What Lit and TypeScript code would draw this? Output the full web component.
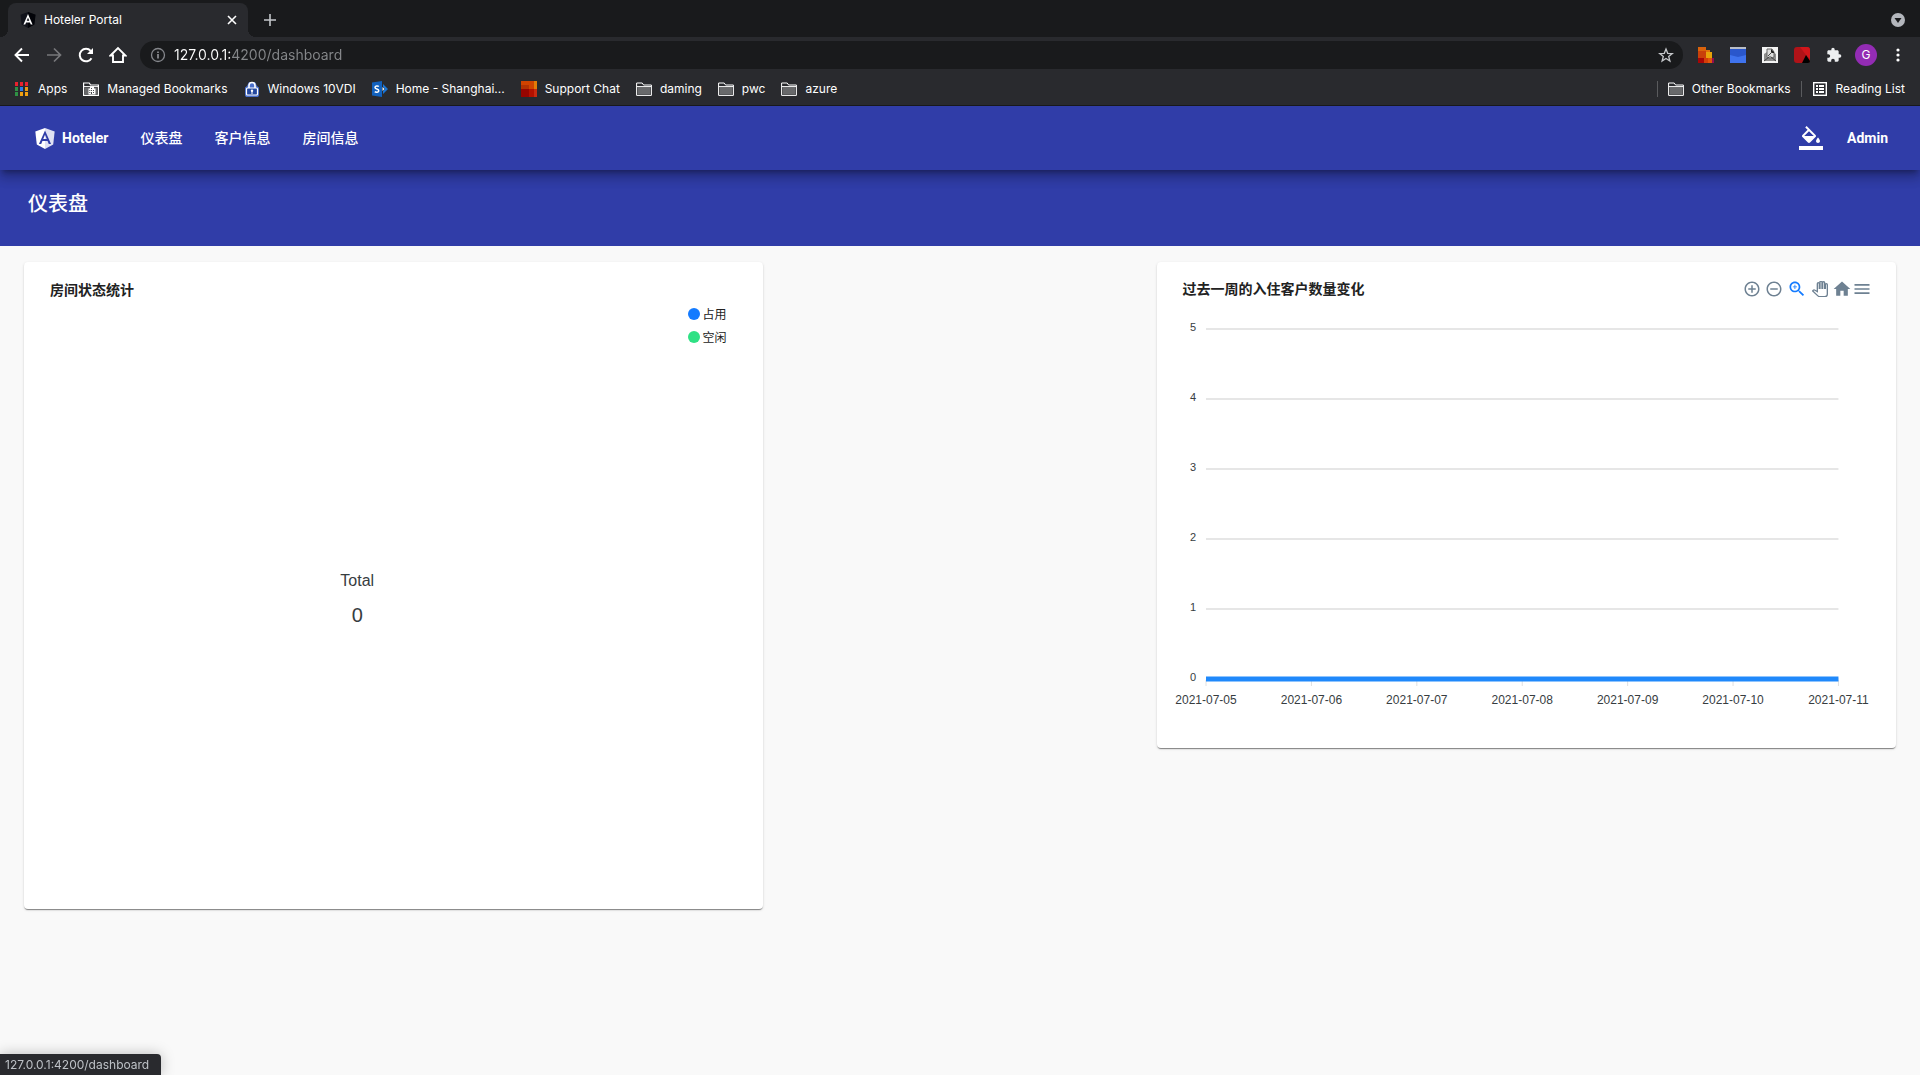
import { LitElement, html, css, svg, type TemplateResult, type SVGTemplateResult } from "lit";
import { customElement, property } from "lit/decorators.js";

const folder = svg`<path d="M.6 2h5.600l1.400 2H15.400v10.400H.6z" fill="none" stroke="#fff" stroke-width="1"/><path d="M1.500 6.200h13v7.400h-13z" fill="#68696b"/><path d="M1 5.600h14" stroke="#fff" stroke-width="1"/>`;

const appsColors = ["#e8222e", "#e8222e", "#e8222e", "#2f9144", "#2a7de8", "#e99a10", "#2f9144", "#f0a010", "#f0a010"];

const bookmarkIcons: Record<string, SVGTemplateResult> = {
  apps: svg`${appsColors.map((c, i) => svg`<rect x=${1 + (i % 3) * 5} y=${1 + Math.floor(i / 3) * 5} width="3" height="4" fill=${c}/>`)}`,
  managed: svg`<path d="M.6 2h5.600l1.400 2H15.400v10.400H.6z" fill="none" stroke="#fff" stroke-width="1.200"/><path d="M1 5.600h14" stroke="#fff"/><path d="M1.500 6.500h13v7h-13z" fill="#68696b"/><path d="M7 5.500h4v2h1.500v6H5.500v-6H7z" fill="#fff"/><path d="M8 7h1v1H8zM10 9h1v1h-1zM8 9h1v1H8zM6.300 9h1v1h-1zM10 11h1v1h-1zM8 11h1v2H8zM6.300 11h1v1h-1z" fill="#4b4c4f"/>`,
  lock: svg`<path d="M3 5l2-4h6l2 4 2 1.500v8L14 16H2l-1-1.500v-8z" fill="#4a6fcb"/><path d="M5 8V4.500a3 3 0 0 1 6 0V8" fill="none" stroke="#fff" stroke-width="1.600"/><rect x="2.500" y="7" width="11" height="7" rx="1" fill="#24489f" stroke="#fff" stroke-width="1.200"/><circle cx="8" cy="9.800" r="1.200" fill="#fff"/><path d="M7.500 10h1v3h-1z" fill="#fff"/>`,
  sharepoint: svg`<path d="M0 1.500L10 0v16L0 14.500z" fill="#1261bd"/><path d="M6.800 5.500C6 4.800 3 4.600 3 6.400c0 1.900 3.800 1.300 3.800 3.300 0 1.900-3 1.800-4 .9" fill="none" stroke="#fff" stroke-width="1.500"/><path d="M11 3l5 5-5 5v-3l2-2-2-2z" fill="#1976d8"/><path d="M10.500 6l2 2-2 2z" fill="#fff"/>`,
  pwc: svg`<path d="M0 0h13v8H0z" fill="#d04300"/><path d="M13 0h3v8h-3z" fill="#e37c06"/><path d="M0 4h8v4H0z" fill="#b23202"/><path d="M0 8h8v8H0z" fill="#960500"/><path d="M8 8h5v8H8z" fill="#b41100"/><path d="M13 8h3v8h-3z" fill="#c92a10"/>`,
  folder,
  reading: svg`<rect x="1.700" y="1.700" width="12.600" height="12.600" fill="none" stroke="#fff" stroke-width="1.400"/><path d="M4 4h2v2H4zM7 4h5v2H7zM4 7h2v2H4zM7 7h5v2H7zM4 10h2v2H4zM7 10h5v2H7z" fill="#fff"/>`,
};

@customElement("browser-chrome")
export class BrowserChrome extends LitElement {
  static styles = css`
    :host { display: block; font: 12px/16px Inter, sans-serif; color: #fff; background: #292a2e; border-bottom: 1px solid #18191b; }
    a { color: inherit; text-decoration: none; }
    button { border: 0; padding: 0; background: none; color: inherit; font: inherit; display: grid; place-items: center; }
    svg { display: block; }
    .tabs { display: flex; align-items: center; height: 37px; background: #191a1c; padding: 0 12px 0 8px; }
    .tab { position: relative; display: flex; align-items: center; align-self: flex-end; box-sizing: border-box; width: 240px; height: 34px; padding: 0 8px 0 12px; gap: 8px; background: #292a2e; border-radius: 8px 8px 0 0; }
    .tab::before, .tab::after { content: ""; position: absolute; bottom: 0; width: 8px; height: 8px; }
    .tab::before { right: 100%; background: radial-gradient(circle at 0 0, #191a1c 8px, #292a2e 8px); }
    .tab::after { left: 100%; background: radial-gradient(circle at 100% 0, #191a1c 8px, #292a2e 8px); }
    .name { flex: 1; }
    .new { width: 44px; height: 28px; margin-top: 3px; }
    .search { width: 20px; height: 20px; margin: 3px 0 0 auto; }
    .bar { display: flex; align-items: center; height: 36px; padding: 0 6px; }
    .bar button { width: 32px; height: 32px; }
    .omni { display: flex; align-items: center; flex: 1; height: 28px; margin: 0 7px 0 6px; padding: 0 1px 0 10px; background: #191a1c; border-radius: 14px; }
    .omni .info { width: 16px; }
    .url { flex: 1; min-width: 0; border: 0; outline: 0; margin: 0 0 0 8px; padding: 0; font: 14px/20px Inter, sans-serif; color: transparent; background: linear-gradient(90deg, #fff 58px, #85878a 58px); background-clip: text; -webkit-background-clip: text; }
    .avatar { display: grid; place-items: center; width: 22px; height: 22px; border-radius: 50%; background: #932cb4; font: 12px/16px Inter, sans-serif; }
    .marks { display: flex; align-items: center; gap: 16px; height: 32px; padding: 0 15px 0 14px; white-space: nowrap; }
    .mark { display: flex; align-items: center; gap: 8px; }
    .end { display: flex; align-items: center; gap: 10px; margin-left: auto; }
    .rule { width: 1px; height: 16px; background: #5a5b5e; }
  `;

  private mark(icon: string, label: string): TemplateResult {
    return html`<a class="mark" href="#"><svg width="16" height="16" viewBox="0 0 16 16">${bookmarkIcons[icon]}</svg>${label}</a>`;
  }

  render() {
    return html`
      <div class="tabs">
        <div class="tab">
          <svg width="16" height="16" viewBox="0 0 250 250"><path d="M125 0L8 42l18 154 99 54 99-54 18-154z" fill="#11131b"/><path d="M125 0l117 42-18 154-99 54z" fill="#020308"/><path fill="#fff" d="M125 30L54 196h28l13-33h60l13 33h28zm20 108h-40l20-49z"/></svg>
          <span class="name">Hoteler Portal</span>
          <button aria-label="Close tab"><svg width="16" height="16" viewBox="0 0 16 16"><path d="M4 4l8 8M12 4l-8 8" stroke="#fff" stroke-width="1.600"/></svg></button>
        </div>
        <button class="new" aria-label="New tab"><svg width="14" height="14" viewBox="0 0 14 14"><path d="M7 1v12M1 7h12" stroke="#c3c6ca" stroke-width="1.600"/></svg></button>
        <button class="search" aria-label="Search tabs"><svg width="14" height="14" viewBox="0 0 14 14"><circle cx="7" cy="7" r="7" fill="#b3b6bc"/><path d="M3.500 5h7L7 10z" fill="#191a1c"/></svg></button>
      </div>
      <div class="bar">
        <button aria-label="Back"><svg width="16" height="16" viewBox="0 0 16 16"><path d="M15 8H2.500M8 1.500L1.500 8 8 14.500" fill="none" stroke="#fff" stroke-width="1.900"/></svg></button>
        <button aria-label="Forward"><svg width="16" height="16" viewBox="0 0 16 16"><path d="M1 8h12.500M8 1.500L14.500 8 8 14.500" fill="none" stroke="#77787b" stroke-width="1.700"/></svg></button>
        <button aria-label="Reload"><svg width="16" height="16" viewBox="0 0 16 16"><path d="M13.500 11.200A6.300 6.300 0 1 1 12.700 3.800" fill="none" stroke="#fff" stroke-width="2"/><path d="M15 1v6H9z" fill="#fff"/></svg></button>
        <button aria-label="Home"><svg width="18" height="18" viewBox="0 0 18 18"><path d="M1.500 9.500L9 2l7.500 7.500H14V16H4V9.500z" fill="none" stroke="#fff" stroke-width="1.900"/></svg></button>
        <div class="omni">
          <button class="info" aria-label="Site information"><svg width="16" height="16" viewBox="0 0 16 16"><circle cx="8" cy="8" r="6.500" fill="none" stroke="#85878c" stroke-width="1.300"/><path d="M8 7v4.500M8 4.500V6" stroke="#9a9ca0" stroke-width="1.500"/></svg></button>
          <input class="url" aria-label="Address" .value=${"127.0.0.1:4200/dashboard"} />
          <button aria-label="Bookmark this tab"><svg width="16" height="16" viewBox="0 0 16 16"><path d="M8 2l1.700 4.300 4.600.3-3.600 2.900 1.200 4.500L8 11.500 4.100 14l1.200-4.500L1.700 6.600l4.600-.3z" fill="none" stroke="#c5c7ca" stroke-width="1.300"/></svg></button>
        </div>
        <button aria-label="Orange blocks"><svg width="16" height="16" viewBox="0 0 16 16"><path d="M0 0h8v4H0z" fill="#d9620b"/><path d="M0 4h8v7H0z" fill="#c9400a"/><path d="M8 3h4v3H8z" fill="#e2700a"/><path d="M8 5h6v6H8z" fill="#e8a20a"/><path d="M0 11h6v5H0z" fill="#a80606"/><path d="M6 11h4v5H6z" fill="#d43e08"/><path d="M10 11h4v5h-4z" fill="#e2560b"/><path d="M14 11h2v5h-2z" fill="#920f50"/></svg></button>
        <button aria-label="Blue window"><svg width="16" height="16" viewBox="0 0 16 16"><path d="M0 0h16v3H0z" fill="#b9bec8"/><path d="M0 2h16v14H0z" fill="#3f73ee"/><path d="M0 2h16v6L8 10 0 8z" fill="#2a57cc"/></svg></button>
        <button aria-label="Page mail"><svg width="16" height="16" viewBox="0 0 16 16"><path d="M0 0h16v16H0z" fill="#f4f4f4"/><path d="M2 7l3-2v5h6V5l3 2v7H2z" fill="#8d8d8d"/><path d="M5 2h5l2 3v5l-4 2-3-2z" fill="#ddd" stroke="#666"/><path d="M9 2l3 3v1H9z" fill="#222"/><path d="M2 14l5-4h2l5 4M6 9l4-4" fill="none" stroke="#444"/></svg></button>
        <button aria-label="Red diamond"><svg width="16" height="16" viewBox="0 0 16 16"><rect width="16" height="16" rx="3" fill="#b01318"/><path d="M3 0h10a3 3 0 0 1 3 3v9l-4-4-6-8z" fill="#d2161b"/><path d="M12 8l4 6a2 2 0 0 1-2 2H8z" fill="#000"/></svg></button>
        <button aria-label="Extensions"><svg width="16" height="16" viewBox="0 0 24 24"><path fill="#eceef0" d="M20.500 11H19V7c0-1.100-.9-2-2-2h-4V3.500a2.500 2.500 0 0 0-5 0V5H4c-1.100 0-1.990.9-1.990 2v3.800H3.500c1.490 0 2.700 1.210 2.700 2.700s-1.210 2.700-2.700 2.700H2V20c0 1.100.9 2 2 2h3.800v-1.500c0-1.490 1.210-2.700 2.700-2.700s2.700 1.210 2.700 2.700V22H17c1.100 0 2-.9 2-2v-4h1.500a2.500 2.500 0 0 0 0-5z"/></svg></button>
        <button aria-label="Profile"><span class="avatar">G</span></button>
        <button aria-label="Menu"><svg width="4" height="14" viewBox="0 0 4 14"><circle cx="2" cy="2" r="1.600" fill="#fff"/><circle cx="2" cy="7" r="1.600" fill="#fff"/><circle cx="2" cy="12" r="1.600" fill="#fff"/></svg></button>
      </div>
      <nav class="marks" aria-label="Bookmarks">
        ${this.mark("apps", "Apps")} ${this.mark("managed", "Managed Bookmarks")}
        ${this.mark("lock", "Windows 10VDI")} ${this.mark("sharepoint", "Home - Shanghai...")}
        ${this.mark("pwc", "Support Chat")} ${this.mark("folder", "daming")}
        ${this.mark("folder", "pwc")} ${this.mark("folder", "azure")}
        <div class="end">
          <span class="rule"></span>${this.mark("folder", "Other Bookmarks")}
          <span class="rule"></span>${this.mark("reading", "Reading List")}
        </div>
      </nav>
    `;
  }
}

@customElement("app-toolbar")
export class AppToolbar extends LitElement {
  static styles = css`
    :host { display: block; }
    a, button { color: inherit; text-decoration: none; font: inherit; border: 0; background: none; display: flex; align-items: center; padding: 0 16px; height: 36px; }
    .bar { position: relative; display: flex; align-items: center; height: 64px; padding: 0 16px; color: #fff; background: #303da8; font: 500 14px/20px Roboto, "Noto Sans CJK SC", sans-serif; box-shadow: 0 5px 5px -3px rgba(0,0,0,.3), 0 8px 10px 1px rgba(0,0,0,.14), 0 3px 14px 2px rgba(0,0,0,.12); }
    .brand { gap: 4px; font-weight: 700; }
    .fill { margin-left: auto; padding: 0 8px; }
    .admin { font-weight: 700; }
    svg { display: block; }
  `;

  render() {
    return html`
      <nav class="bar">
        <a class="brand" href="#"><svg width="26" height="26" viewBox="0 0 250 250"><path fill="#fff" d="M125 30L31.900 63.200l14.200 123.100L125 230z"/><path fill="#dfe1f3" d="M125 30v200l78.900-43.700 14.200-123.100z"/><path fill="#303da8" d="M125 52.100L66.800 182.600h21.700l11.700-29.200h49.400l11.700 29.200H183zm17 83.300h-34l17-40.900z"/></svg>Hoteler</a>
        <a href="#">仪表盘</a>
        <a href="#">客户信息</a>
        <a href="#">房间信息</a>
        <button class="fill" aria-label="Theme"><svg width="24" height="24" viewBox="0 0 24 24" fill="#fff"><path d="M16.560 8.940L7.620 0 6.210 1.410l2.380 2.380-5.150 5.150c-.59.59-.59 1.540 0 2.120l5.500 5.500c.29.29.68.44 1.060.44s.77-.15 1.060-.44l5.500-5.500c.59-.58.59-1.530 0-2.120zM5.210 10L10 5.210 14.790 10zM19 11.500s-2 2.170-2 3.500c0 1.100.9 2 2 2s2-.9 2-2c0-1.330-2-3.500-2-3.500zM0 20h24v4H0z"/></svg></button>
        <button class="admin">Admin</button>
      </nav>
    `;
  }
}

const cardBase = css`
  :host { display: block; box-sizing: border-box; background: #fff; border-radius: 4px; padding: 16px; color: #222; box-shadow: 0 2px 1px -1px rgba(0,0,0,.3), 0 1px 1px 0 rgba(0,0,0,.18), 0 1px 3px 0 rgba(0,0,0,.12); }
  .title { margin: 0; font: 700 14px/24px Roboto, "Noto Sans CJK SC", sans-serif; }
`;

@customElement("room-status")
export class RoomStatus extends LitElement {
  static styles = [cardBase, css`
    .title { padding-left: 10px; }
    .body { display: flex; height: 591px; }
    .donut { flex: 1; display: flex; flex-direction: column; align-items: center; justify-content: center; gap: 10px; color: #373d3f; font-family: "Liberation Sans", sans-serif; }
    .total { font-size: 16px; line-height: 24px; }
    .value { font-size: 20px; line-height: 24px; }
    .legend { width: 73px; margin: 0; padding: 0; list-style: none; font: 12px/23px "Noto Sans CJK SC", sans-serif; }
    .item { display: flex; align-items: center; gap: 2px; padding-left: 14px; }
    .dot { width: 12px; height: 12px; border-radius: 50%; background: #147bff; }
    .free { background: #2fe184; }
  `];

  render() {
    return html`
      <h2 class="title">房间状态统计</h2>
      <div class="body">
        <div class="donut"><span class="total">Total</span><span class="value">0</span></div>
        <ul class="legend">
          <li class="item"><span class="dot"></span>占用</li>
          <li class="item"><span class="dot free"></span>空闲</li>
        </ul>
      </div>
    `;
  }
}

@customElement("guest-trend")
export class GuestTrend extends LitElement {
  static styles = [cardBase, css`
    .head { display: flex; align-items: center; padding: 0 8px 0 10px; height: 22px; }
    .tools { display: flex; align-items: center; margin-left: auto; color: #6e8192; }
    button { display: grid; place-items: center; width: 20px; height: 20px; border: 0; padding: 0; background: none; color: inherit; fill: currentColor; }
    .wide { width: 24px; }
    .on { width: 22px; color: #147bff; }
    .plot { padding: 28px 42px 14px 33px; }
    .chart { display: block; width: 100%; height: 390px; overflow: visible; font-family: "Liberation Sans", sans-serif; fill: #373d3f; }
    .tick { font-size: 11px; text-anchor: end; }
    .date { font-size: 12px; text-anchor: middle; }
    .grid { stroke: #e6e6e6; stroke-width: 2; }
    .mark { stroke: #e0e0e0; }
    .series { stroke: #2089fb; stroke-width: 5; }
  `];

  @property({ attribute: false }) days = ["05", "06", "07", "08", "09", "10", "11"];

  private icon(label: string, size: number, path: SVGTemplateResult, cls = ""): TemplateResult {
    return html`<button class=${cls} aria-label=${label}><svg width=${size} height=${size} viewBox="0 0 24 24">${path}</svg></button>`;
  }

  render() {
    const last = this.days.length - 1;
    return html`
      <div class="head">
        <h2 class="title">过去一周的入住客户数量变化</h2>
        <div class="tools">
          ${this.icon("Zoom in", 18, svg`<path d="M13 7h-2v4H7v2h4v4h2v-4h4v-2h-4V7zm-1-5C6.480 2 2 6.480 2 12s4.480 10 10 10 10-4.480 10-10S17.520 2 12 2zm0 18c-4.410 0-8-3.590-8-8s3.590-8 8-8 8 3.590 8 8-3.590 8-8 8z"/>`)}
          ${this.icon("Zoom out", 18, svg`<path d="M7 11v2h10v-2H7zm5-9C6.480 2 2 6.480 2 12s4.480 10 10 10 10-4.480 10-10S17.520 2 12 2zm0 18c-4.410 0-8-3.590-8-8s3.590-8 8-8 8 3.590 8 8-3.590 8-8 8z"/>`, "wide")}
          ${this.icon("Selection zoom", 20, svg`<path d="M15.500 14h-.79l-.28-.27C15.410 12.590 16 11.110 16 9.500 16 5.910 13.090 3 9.500 3S3 5.910 3 9.500 5.910 16 9.500 16c1.610 0 3.090-.59 4.230-1.570l.27.28v.79l5 4.990L20.490 19l-4.990-5zm-6 0C7.010 14 5 11.990 5 9.500S7.010 5 9.500 5 14 7.010 14 9.500 11.990 14 9.500 14z"/><path d="M12 10h-2v2H9v-2H7V9h2V7h1v2h2v1z"/>`, "on")}
          ${this.icon("Panning", 16, svg`<path fill="#fff" stroke="#6e8192" stroke-width="2" d="M23 5.500V20c0 2.200-1.800 3.500-4 3.500h-7.300c-1.080 0-2.100-.43-2.850-1.190L1 14.830s1.260-1.230 1.300-1.250c.22-.19.49-.29.79-.29.22 0 .42.060.6.160.040.010 4.310 2.460 4.310 2.460V4c0-.83.67-1.500 1.500-1.500S11 3.170 11 4v7h1V1.500c0-.83.67-1.500 1.500-1.500S15 .67 15 1.500V11h1V2.500c0-.83.67-1.500 1.500-1.500s1.500.67 1.500 1.500V11h1V5.500c0-.83.67-1.500 1.500-1.500s1.500.67 1.500 1.500z"/>`, "wide")}
          ${this.icon("Reset zoom", 20, svg`<path d="M10 20v-6h4v6h5v-8h3L12 3 2 12h3v8z"/>`)}
          ${this.icon("Menu", 20, svg`<path d="M3 18h18v-2H3v2zm0-5h18v-2H3v2zm0-7v2h18V6H3z"/>`)}
        </div>
      </div>
      <div class="plot">
        <svg class="chart" role="img" aria-label="过去一周的入住客户数量变化">
          ${[5, 4, 3, 2, 1, 0].map((n, i) => svg`
            <line class="grid" x1="0" x2="100%" y1=${i * 70 + 1} y2=${i * 70 + 1}/>
            <text class="tick" x="-10" y=${i * 70 + 3}>${n}</text>`)}
          ${this.days.map((d, i) => svg`
            <line class="mark" x1="${(i * 100) / last}%" x2="${(i * 100) / last}%" y1="352" y2="358"/>
            <text class="date" x="${(i * 100) / last}%" y="376">2021-07-${d}</text>`)}
          <line class="series" x1="0" x2="100%" y1="351" y2="351"/>
        </svg>
      </div>
    `;
  }
}

@customElement("app-root")
export class AppRoot extends LitElement {
  static styles = css`
    :host { display: flex; flex-direction: column; min-height: 100vh; background: #f9f9f9; }
    .chrome { position: relative; z-index: 2; }
    .toolbar { position: relative; z-index: 1; }
    .heading { box-sizing: border-box; height: 76px; padding: 18px 28px; color: #fff; background: #303da8; }
    .page { margin: 0; font: 500 20px/32px Roboto, "Noto Sans CJK SC", sans-serif; }
    .cards { display: grid; grid-template-columns: 15fr 15fr; column-gap: 21%; align-items: start; padding: 16px 24px; }
    .status { position: fixed; left: 0; bottom: 0; z-index: 3; padding: 3px 12px 2px 5px; border-radius: 0 4px 0 0; background: #292a2e; color: #bdc1c6; font: 12px/16px Inter, sans-serif; box-shadow: 0 0 14px rgba(0,0,0,.25); }
  `;

  render() {
    return html`
      <browser-chrome class="chrome"></browser-chrome>
      <app-toolbar class="toolbar"></app-toolbar>
      <header class="heading"><h1 class="page">仪表盘</h1></header>
      <main class="cards">
        <room-status></room-status>
        <guest-trend></guest-trend>
      </main>
      <div class="status">127.0.0.1:4200/dashboard</div>
    `;
  }
}
